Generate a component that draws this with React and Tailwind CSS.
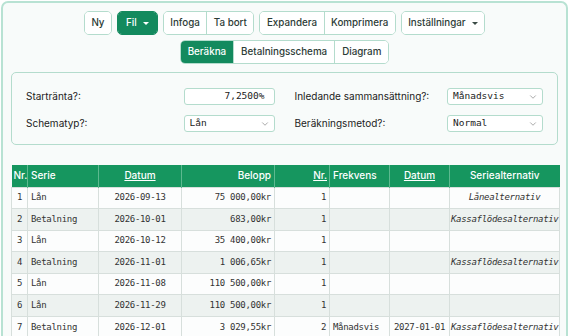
import { ChevronDown } from "lucide-react";

const ui = { fontFamily: "Inter, 'Noto Sans', sans-serif" };
const mono = { fontFamily: "'DejaVu Sans Mono', 'Liberation Mono', monospace" };

function Caret({ color }) {
  return (
    <svg width="6" height="3" viewBox="0 0 6 3" className="ml-[6px]">
      <path d="M0 0h6L3 3z" fill={color} />
    </svg>
  );
}

function Btn({ children, active, className = "" }) {
  return (
    <div
      className={
        "flex h-[22px] items-center px-[6.5px] text-[9.8px] font-medium " +
        (active ? "bg-[#138a5e] text-white" : "bg-white text-[#2c3b36]") +
        " " +
        className
      }
    >
      {children}
    </div>
  );
}

function Group({ children }) {
  return (
    <div className="flex overflow-hidden rounded-[5px] border border-[#b4dccd] divide-x divide-[#b4dccd]">
      {children}
    </div>
  );
}

function Select({ value, width }) {
  return (
    <div
      className={`flex h-[17px] items-center justify-between rounded-[3px] border border-[#b4dccd] bg-white pl-[5px] pr-[4px] ${width}`}
    >
      <span className="text-[9.5px] text-[#222]" style={mono}>
        {value}
      </span>
      <ChevronDown size={10} strokeWidth={1.5} className="text-[#777]" />
    </div>
  );
}

const rows = [
  ["1", "Lån", "2026-09-13", "75 000,00kr", "1", "", "", "Lånealternativ"],
  ["2", "Betalning", "2026-10-01", "683,00kr", "1", "", "", "Kassaflödesalternativ"],
  ["3", "Lån", "2026-10-12", "35 400,00kr", "1", "", "", ""],
  ["4", "Betalning", "2026-11-01", "1 006,65kr", "1", "", "", "Kassaflödesalternativ"],
  ["5", "Lån", "2026-11-08", "110 500,00kr", "1", "", "", ""],
  ["6", "Lån", "2026-11-29", "110 500,00kr", "1", "", "", ""],
  ["7", "Betalning", "2026-12-01", "3 029,55kr", "2", "Månadsvis", "2027-01-01", "Kassaflödesalternativ"],
];

export default function App() {
  return (
    <div className="h-[336px] overflow-hidden bg-white" style={ui}>
      <div className="ml-px mt-px h-[400px] w-[567px] rounded-t-[7px] border-2 border-b-0 border-[#b8e2d3] bg-[#f8fbfa] px-[8px] pt-[8px]">
        <div className="flex justify-center gap-[5px]">
          <Group>
            <Btn>Ny</Btn>
          </Group>
          <div className="flex overflow-hidden rounded-[5px] border border-[#138a5e]">
            <Btn active className="px-[8px]">
              Fil
              <Caret color="#fff" />
            </Btn>
          </div>
          <Group>
            <Btn>Infoga</Btn>
            <Btn>Ta bort</Btn>
          </Group>
          <Group>
            <Btn>Expandera</Btn>
            <Btn>Komprimera</Btn>
          </Group>
          <Group>
            <Btn>
              Inställningar
              <Caret color="#3a4a45" />
            </Btn>
          </Group>
        </div>

        <div className="mt-[5px] flex justify-center">
          <div className="flex overflow-hidden rounded-[5px] border border-[#b4dccd] divide-x divide-[#b4dccd]">
            <Btn active className="px-[7px]">Beräkna</Btn>
            <Btn className="px-[7px]">Betalningsschema</Btn>
            <Btn className="px-[7px]">Diagram</Btn>
          </div>
        </div>

        <div className="mt-[8px] rounded-[5px] border border-[#b4dccd] bg-[#f8fbfa] px-[14px] pb-[12px] pt-[15px]">
          <div className="grid grid-cols-2 gap-x-[20px] gap-y-[10px] text-[10px] text-[#222]">
            <div className="flex items-center justify-between">
              <span>Startränta?:</span>
              <div
                className="flex h-[17px] w-[91px] items-center justify-end rounded-[3px] border border-[#b4dccd] bg-white pr-[9px] text-[9.5px] text-[#222]"
                style={mono}
              >
                7,2500%
              </div>
            </div>
            <div className="flex items-center justify-between">
              <span>Inledande sammansättning?:</span>
              <Select value="Månadsvis" width="w-[96px]" />
            </div>
            <div className="flex items-center justify-between">
              <span>Schematyp?:</span>
              <Select value="Lån" width="w-[91px]" />
            </div>
            <div className="flex items-center justify-between">
              <span>Beräkningsmetod?:</span>
              <Select value="Normal" width="w-[96px]" />
            </div>
          </div>
        </div>

        <table className="mt-[20px] w-full table-fixed border-collapse">
          <colgroup>
            <col className="w-[16px]" />
            <col className="w-[71px]" />
            <col className="w-[83px]" />
            <col className="w-[93px]" />
            <col className="w-[55px]" />
            <col className="w-[60px]" />
            <col className="w-[60px]" />
            <col className="w-[110px]" />
          </colgroup>
          <thead>
            <tr className="h-[22px] bg-[#16965f] text-[10px] font-medium text-white">
              <th className="border-r border-[#5cb98f] px-[2px] text-left font-medium">Nr.</th>
              <th className="border-r border-[#5cb98f] px-[3px] text-left font-medium">Serie</th>
              <th className="border-r border-[#5cb98f] px-[3px] text-center font-medium underline">Datum</th>
              <th className="border-r border-[#5cb98f] px-[3px] text-right font-medium">Belopp</th>
              <th className="border-r border-[#5cb98f] px-[2px] text-right font-medium underline">Nr.</th>
              <th className="border-r border-[#5cb98f] px-[3px] text-left font-medium">Frekvens</th>
              <th className="border-r border-[#5cb98f] px-[3px] text-center font-medium underline">Datum</th>
              <th className="px-[3px] text-center font-medium">Seriealternativ</th>
            </tr>
          </thead>
          <tbody className="text-[9px] tracking-[-0.3px] text-[#333]" style={mono}>
            {rows.map((r, i) => (
              <tr key={i} className={"h-[21.6px] " + (i % 2 ? "bg-[#edf2f0]" : "bg-[#fcfdfd]")}>
                <td className="border border-[#d7dfdc] px-[2px] text-center">{r[0]}</td>
                <td className="border border-[#d7dfdc] px-[3px]">{r[1]}</td>
                <td className="border border-[#d7dfdc] px-[3px] text-center">{r[2]}</td>
                <td className="border border-[#d7dfdc] px-[3px] text-right">{r[3]}</td>
                <td className="border border-[#d7dfdc] px-[3px] text-right">{r[4]}</td>
                <td className="border border-[#d7dfdc] px-[3px]">{r[5]}</td>
                <td className="border border-[#d7dfdc] px-[3px] text-center">{r[6]}</td>
                <td className="overflow-hidden whitespace-nowrap border border-[#d7dfdc] px-[1px] text-center italic">
                  {r[7]}
                </td>
              </tr>
            ))}
            <tr className="h-[21.6px] bg-[#edf2f0]">
              {Array.from({ length: 8 }).map((_, j) => (
                <td key={j} className="border border-[#d7dfdc]" />
              ))}
            </tr>
          </tbody>
        </table>
      </div>
    </div>
  );
}
